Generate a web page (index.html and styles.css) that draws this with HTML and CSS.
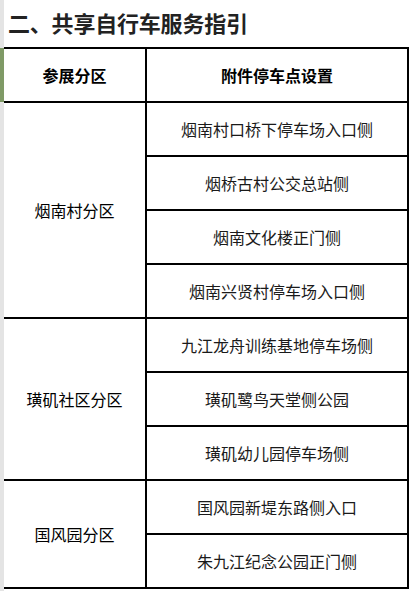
FILE: index.html
```html
<!DOCTYPE html>
<html lang="zh">
<head>
<meta charset="utf-8">
<link rel="stylesheet" href="styles.css">
</head>
<body>
<div class="page">
  <div class="strip"><div class="strip-mark"></div></div>
  <div class="main">
    <h1 class="title">二、共享自行车服务指引</h1>
    <div class="table">
      <div class="cell head">参展分区</div>
      <div class="cell head">附件停车点设置</div>
      <div class="cell zone span4">烟南村分区</div>
      <div class="cell">烟南村口桥下停车场入口侧</div>
      <div class="cell">烟桥古村公交总站侧</div>
      <div class="cell">烟南文化楼正门侧</div>
      <div class="cell">烟南兴贤村停车场入口侧</div>
      <div class="cell zone span3">璜矶社区分区</div>
      <div class="cell">九江龙舟训练基地停车场侧</div>
      <div class="cell">璜矶鹭鸟天堂侧公园</div>
      <div class="cell">璜矶幼儿园停车场侧</div>
      <div class="cell zone span2">国风园分区</div>
      <div class="cell">国风园新堤东路侧入口</div>
      <div class="cell">朱九江纪念公园正门侧</div>
    </div>
  </div>
</div>
</body>
</html>
```
FILE: styles.css
```css
html, body {
  margin: 0;
  padding: 0;
  background: #fff;
}
body {
  font-family: "Noto Sans CJK SC", "Noto Sans", sans-serif;
  color: #111;
}
.page {
  display: flex;
  width: 410px;
  height: 591px;
  overflow: hidden;
}
.strip {
  width: 4px;
  flex: none;
  background: #e4e4e4;
}
.strip-mark {
  margin-top: 48px;
  height: 54px;
  background: #7f9a66;
}
.main {
  flex: 1;
}
.title {
  margin: 0;
  height: 47px;
  line-height: 45px;
  padding-left: 4px;
  font-size: 22px;
  font-weight: 700;
  color: #222;
  letter-spacing: -0.2px;
}
.table {
  width: 405px;
  box-sizing: border-box;
  display: grid;
  grid-template-columns: 141px 1fr;
  grid-auto-rows: 52px;
  gap: 2px;
  padding: 2px 2px 2px 0;
  background: #000;
}
.cell {
  background: #fff;
  display: flex;
  align-items: center;
  justify-content: center;
  font-size: 16px;
  color: #1a1a1a;
}
.head {
  font-weight: 700;
  color: #000;
}
.zone {
  grid-column: 1;
  color: #000;
}
.span4 { grid-row: span 4; }
.span3 { grid-row: span 3; }
.span2 { grid-row: span 2; }
```
